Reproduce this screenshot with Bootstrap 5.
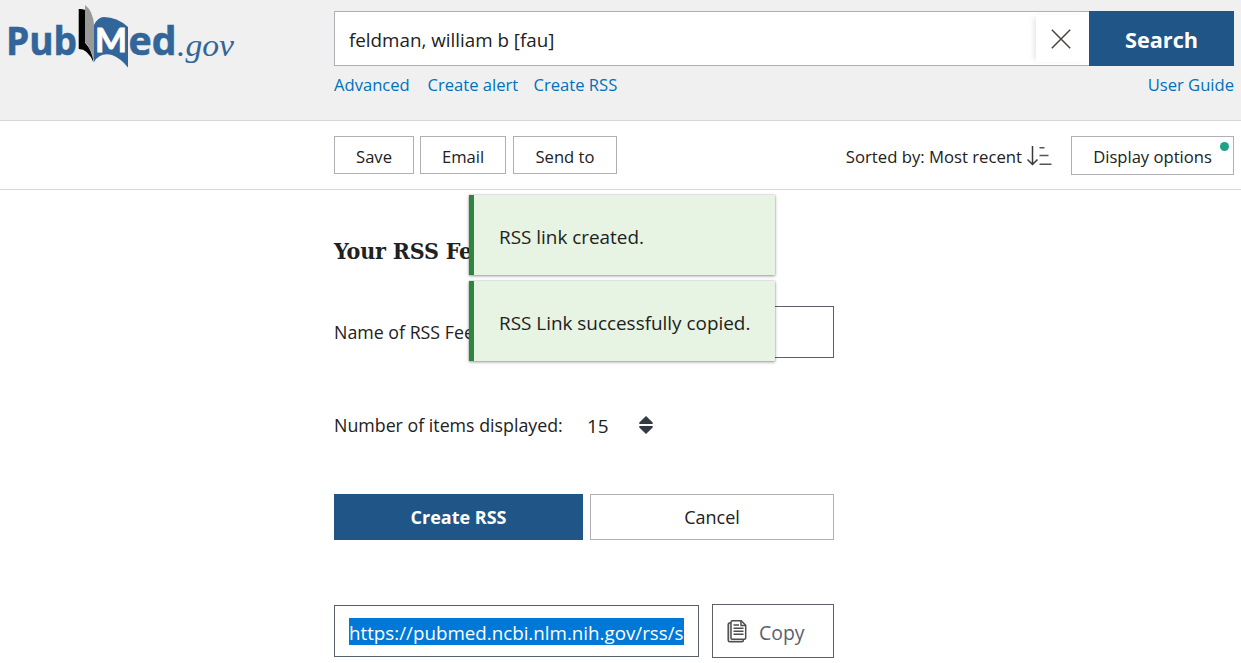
<!DOCTYPE html>
<html lang="en">
<head>
<meta charset="utf-8">
<meta name="viewport" content="width=device-width, initial-scale=1">
<title>feldman, william b [fau] - PubMed</title>
<link href="https://cdn.jsdelivr.net/npm/bootstrap@5.3.0/dist/css/bootstrap.min.css" rel="stylesheet">
<style>
body{font-family:"Open Sans","Noto Sans",sans-serif;color:#212121;background:#fff;font-size:17.8px;line-height:24px;overflow:hidden;height:663px}
.site-head{background:#f0f0f0;border-bottom:1px solid #d6d7d9;height:121px}
.side{width:334px;flex:none}
.main-col{padding-right:7px}
.search-row{height:55px;margin-top:11px}
.query{border:1px solid #aeb0b5;border-right:0;border-radius:0;padding:2px 0 0 14px;font-size:18.8px;color:#212121;background:#fff;height:55px}
.clear-btn{width:53px;flex:none;background:#fff;border:solid #aeb0b5;border-width:1px 0}
.clear-btn div{height:47px;margin-top:3px;box-shadow:-4px 0 6px -2px rgba(0,0,0,.1);position:relative}
.query-wrap{background:#fff}
.blue-btn,.blue-btn:hover{background:#205588;color:#fff;border:0;border-radius:0;font-weight:700;padding:0}
.search-btn,.search-btn:hover{width:145px;font-size:21.7px;padding-top:3px}
.links{font-size:16.6px;margin-top:7px}
.links a{color:#0071bc;text-decoration:none}
.toolbar{height:69px;border-bottom:1px solid #d6d7d9;padding-top:15px;font-size:16.7px}
.line-btn{border:1px solid #aeb0b5;border-radius:0;padding:4px 0 0;color:#212121;background:#fff;font-size:16.6px;line-height:24px;height:38px}
.line-btn.wide{width:163px;height:39px;padding:2px 0 0}
.dot{width:9px;height:9px;right:4px;top:5px;background:#20a286}
.rss-title{font:700 23px/30px "DejaVu Serif Condensed","DejaVu Serif",serif;letter-spacing:-.2px;margin:46px 0 0}
.rss-form{width:500px}
.name-row{height:52px;margin-top:40px}
.name-input{border:1px solid #5b616b;border-radius:0;width:334px;height:52px}
.count-row{margin-top:53px;height:28px}
.actions{margin-top:55px;height:46px;gap:7px}
.actions .line-btn{font-size:18px;height:46px;padding:0;width:244px}
.actions .blue-btn{width:249px;font-size:18px}
.copy-row{margin-top:64px;height:54px}
.url-box{width:365px;height:52px;border:1px solid #5b616b;margin-top:1px;padding:12px 14px}
.url-sel{background:#0078d7;color:#fff;font-size:18.75px;line-height:30px;height:27px;width:335px;white-space:nowrap}
.copy-btn{width:122px;border:1px solid #5b616b;border-radius:0;padding:3px 0 0 13px;color:#5b616b;font-size:19.4px}
.toasts{left:469px;top:195px;width:306px;z-index:5}
.note{height:80px;margin-bottom:6px;background:#e7f4e4;border-left:5px solid #2e8540;box-shadow:0 1px 3px rgba(0,0,0,.4),0 0 1px rgba(0,0,0,.3);padding:3px 0 0 25px;font-size:18.9px}
</style>
</head>
<body class="position-relative">
<header class="site-head d-flex">
  <div class="side">
    <svg width="245" height="80" viewBox="0 0 245 80" class="d-block" role="img" aria-label="PubMed.gov">
      <g fill="#326599" font-family="'Open Sans',sans-serif" font-weight="700" font-size="40">
        <text x="6" y="55" textLength="71" lengthAdjust="spacingAndGlyphs" stroke="#326599" stroke-width=".6">Pub</text>
        <text x="128.500" y="55" textLength="48" lengthAdjust="spacingAndGlyphs" stroke="#326599" stroke-width=".6">ed</text>
      </g>
      <path d="M78.700 9q3-.5 6.500 1V43q7 7 8.300 19.500Q88 49 78.700 49z" fill="#000"/>
      <path d="M85 5q8 6 9 20v37q-2-12-9-20z" fill="#999"/>
      <path d="M94 25q4-8 10-8 13 0 24 10v40.500q-7-9-16-12.500-12-3-18 7z" fill="#326599"/>
      <text x="95" y="52" fill="#fff" stroke="#fff" stroke-width=".8" font-family="Lato,sans-serif" font-weight="700" font-size="33" textLength="32" lengthAdjust="spacingAndGlyphs">M</text>
      <text x="177" y="55.500" fill="#326599" font-family="'Liberation Serif',serif" font-style="italic" font-size="31.500" textLength="57" lengthAdjust="spacingAndGlyphs">.gov</text>
    </svg>
  </div>
  <div class="main-col flex-grow-1">
    <div class="search-row d-flex">
      <div class="query-wrap flex-grow-1"><input class="query form-control" value="feldman, william b [fau]" aria-label="Search term"></div>
      <div class="clear-btn"><div class="d-flex align-items-center justify-content-center">
        <svg width="20" height="20" viewBox="0 0 20 20" style="margin-right:4px" stroke="#494440" stroke-width="1.500" fill="none"><path d="M.8.800l18.400 18.400M19.200.800L.8 19.200"/></svg></div></div>
      <button class="btn blue-btn search-btn">Search</button>
    </div>
    <div class="links d-flex"><a href="#" style="width:93.500px">Advanced</a><a href="#" style="width:106px">Create alert</a><a href="#">Create RSS</a><a href="#" class="ms-auto">User Guide</a></div>
  </div>
</header>
<section class="toolbar d-flex">
  <div class="side"></div>
  <div class="main-col d-flex flex-grow-1 align-items-start">
    <button class="btn line-btn" style="width:80px;margin-right:6px">Save</button>
    <button class="btn line-btn" style="width:86px;margin-right:7px">Email</button>
    <button class="btn line-btn" style="width:104px">Send to</button>
    <div class="ms-auto d-flex" style="padding-top:9px;margin-right:19px">
      <span>Sorted by: Most recent</span>
      <svg width="26" height="22" viewBox="0 0 26 22" style="margin-left:4px" fill="none" stroke="#3b3838" stroke-width="1.500"><path d="M6.500 1v18.500M1.500 14.500l5 5 5-5"/><path d="M13.500 2.800h5M13.500 10.500h9M13.500 19.200h12" stroke="#555"/></svg>
    </div>
    <button class="btn line-btn wide position-relative">Display options<span class="dot position-absolute rounded-circle"></span></button>
  </div>
</section>
<main class="d-flex">
  <div class="side"></div>
  <div class="rss-form">
    <h1 class="rss-title">Your RSS Feed</h1>
    <div class="name-row d-flex align-items-center justify-content-between"><label for="n">Name of RSS Feed:</label><input id="n" class="name-input form-control"></div>
    <div class="count-row d-flex align-items-center"><span style="width:253px">Number of items displayed:</span><span style="font-size:19px;width:51px;padding-top:2px">15</span>
      <svg width="14" height="18" viewBox="0 0 14 18" style="margin-left:.6px" fill="#323a45"><path d="M7 0l6.700 6.500V8H.3V6.500zM7 18l6.700-6.500V10H.3v1.500z"/></svg></div>
    <div class="actions d-flex"><button class="btn blue-btn">Create RSS</button><button class="btn line-btn">Cancel</button></div>
    <div class="copy-row d-flex justify-content-between">
      <div class="url-box"><div class="url-sel">https://pubmed.ncbi.nlm.nih.gov/rss/s</div></div>
      <button class="btn copy-btn d-flex align-items-center">
        <svg width="20" height="23" viewBox="0 0 20 23" style="margin:-6px 12px 0 1px;position:relative;top:2px" fill="none" stroke="#4d4d4d" stroke-width="1.500"><path d="M4 3H2.500Q1.200 3 1.200 4.500v15.700q0 1.600 1.600 1.600h12q1.600 0 1.600-1.800" fill="#ddd"/><path d="M5.500.800h8.700l4.500 4.500v12.500q0 1.500-1.500 1.500H5.500Q4 19.300 4 17.800V2.300Q4 .800 5.500.800z" fill="#fff"/><path d="M14 1v4.500h4.500M6.500 5h5.500M6.500 8.300h10M6.500 11.300h10M6.500 14.300h10"/></svg>
        Copy</button>
    </div>
  </div>
</main>
<div class="toasts position-absolute">
  <div class="note d-flex align-items-center">RSS link created.</div>
  <div class="note d-flex align-items-center">RSS Link successfully copied.</div>
</div>
<script src="https://cdn.jsdelivr.net/npm/bootstrap@5.3.0/dist/js/bootstrap.bundle.min.js"></script>
</body>
</html>
